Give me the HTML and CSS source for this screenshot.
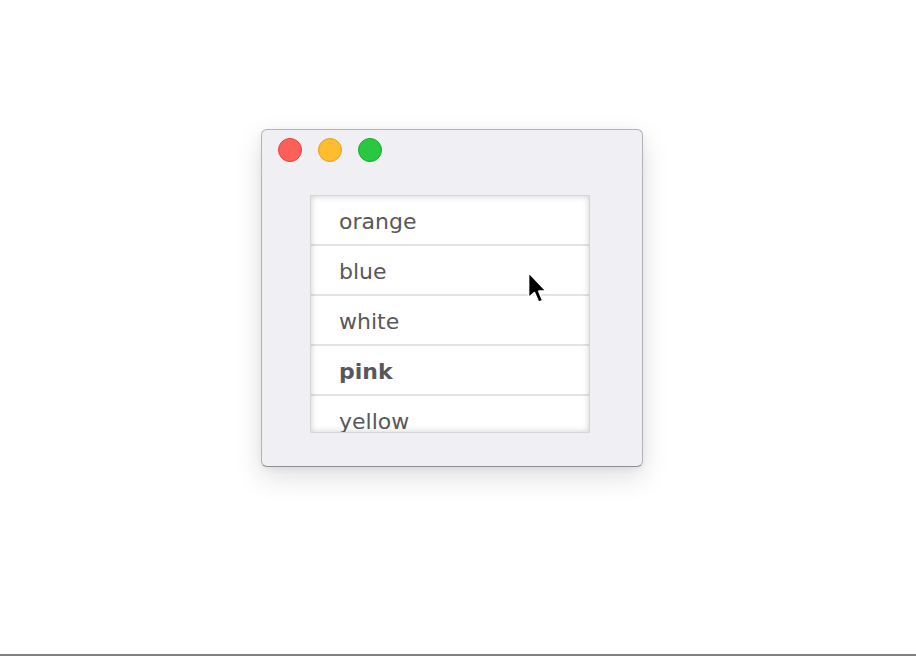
FILE: index.html
```html
<!DOCTYPE html>
<html lang="en">
<head>
  <meta charset="UTF-8">
  <meta name="viewport" content="width=device-width, initial-scale=1.0">
  <title>List Window</title>
  <link rel="stylesheet" href="styles.css">
</head>
<body>

<div class="stage">
  <div class="window">
    <!-- title bar -->
    <div class="titlebar">
      <span class="light close"></span>
      <span class="light minimize"></span>
      <span class="light zoom"></span>
    </div>

    <div class="list-box">
      <ul class="list">
        <li class="row">orange</li>
        <li class="row">blue</li>
        <li class="row">white</li>
        <li class="row selected">pink</li>
        <li class="row">yellow</li>
      </ul>
    </div>

    <svg class="cursor" width="24" height="38" viewBox="0 0 24 38">
      <path d="M1.5 1.5 L1.5 27 L7.4 21.6 L11.6 31.4 L15.8 29.6 L11.8 20.2 L19.4 20.2 Z" fill="#000" stroke="#fff" stroke-width="1.7" stroke-linejoin="round"/>
    </svg>
  </div>
</div>

<div class="bottom-line"></div>

</body>
</html>
```

FILE: styles.css
```css
html, body {
  height: 100%;
}

body {
  margin: 0;
  background: #ffffff;
  font-family: "DejaVu Sans", "Liberation Sans", sans-serif;
  display: flex;
  flex-direction: column;
}

.stage {
  flex: 1;
  padding: 129px 0 0 261px;
}

.window {
  position: relative;
  width: 380px;
  height: 336px;
  background: #efeff4;
  border: 1px solid #b4b4b8;
  border-bottom-color: #8e8e92;
  border-radius: 6px;
  box-shadow: 0 10px 28px rgba(0, 0, 0, 0.13), 0 2px 6px rgba(0, 0, 0, 0.06);
}

.titlebar {
  display: flex;
  gap: 16px;
  padding: 8px 0 0 16px;
  height: 24px;
}

.light {
  width: 22px;
  height: 22px;
  border-radius: 50%;
  border: 1px solid transparent;
}

.close {
  background: #fe5f57;
  border-color: #e0443e;
}

.minimize {
  background: #febc2e;
  border-color: #dea123;
}

.zoom {
  background: #28c840;
  border-color: #1aab29;
}

.list-box {
  position: relative;
  margin: 33px 0 0 48px;
  width: 278px;
  height: 236px;
  overflow: hidden;
  background: #ffffff;
  border: 1px solid #d6d6d6;
}

/* inset edge shading drawn over the rows */
.list-box::after {
  content: "";
  position: absolute;
  inset: 0;
  box-shadow: inset 0 0 6px rgba(0, 0, 0, 0.2);
  pointer-events: none;
}

.list {
  list-style: none;
  margin: 0;
  padding: 0;
}

.row {
  height: 48px;
  line-height: 52px;
  padding-left: 28px;
  border-bottom: 2px solid #e3e3e3;
  font-size: 22px;
  color: #58585a;
}

.selected {
  font-weight: bold;
}

.cursor {
  position: absolute;
  left: 265px;
  top: 141px;
}

.bottom-line {
  height: 2px;
  background: #808080;
}
```
